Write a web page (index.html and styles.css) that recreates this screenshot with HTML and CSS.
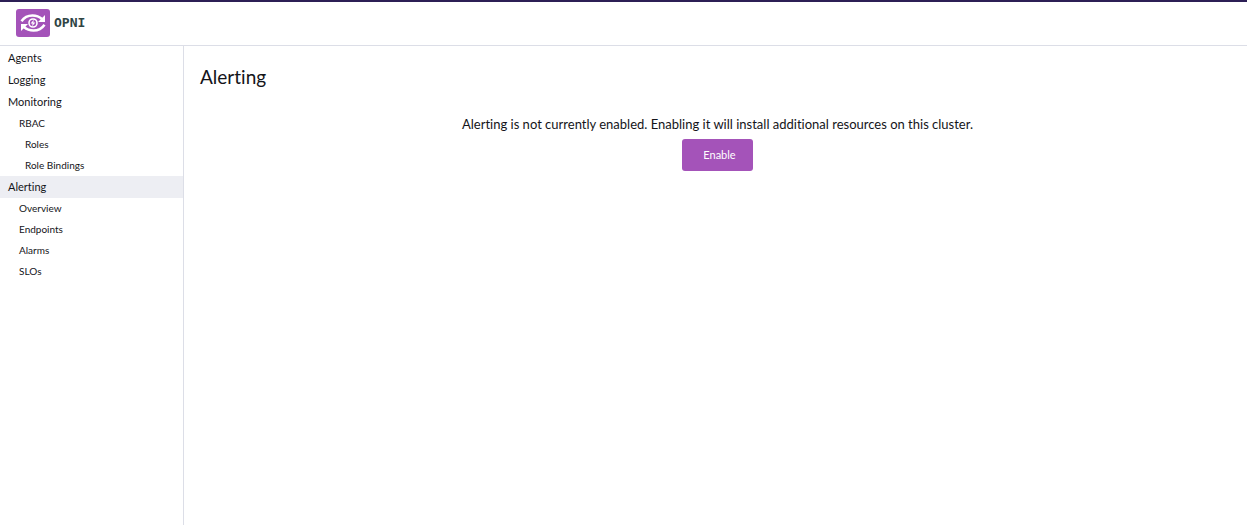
FILE: index.html
```html
<!DOCTYPE html>
<html lang="en">
<head>
<meta charset="utf-8">
<title>Opni - Alerting</title>
<link rel="stylesheet" href="styles.css">
</head>
<body>
<header class="header">
  <a class="brand" href="#">
    <svg class="brand-mark" viewBox="0 0 34 28" aria-hidden="true">
      <rect width="34" height="28" rx="3" fill="#a453b9"/>
      <g fill="none" stroke="#fff" stroke-width="2.5">
        <path d="M5.500 12.300C8 8.500 12 6.500 16.500 6.500c4 0 7 1.300 9.500 3.500"/>
        <path d="M28.500 15.700C26 19.500 22 21.500 17.500 21.500c-4 0-7-1.300-9.500-3.500"/>
        <circle cx="17" cy="14" r="4" stroke-width="1.600"/>
      </g>
      <path d="M29 6v7h-7zM5 22v-7h7z" fill="#fff"/>
      <path d="M17.800 10.800l-3.200 3.700h2l-.5 2.800 3.300-3.800h-2.100z" fill="#fff"/>
    </svg>
    <span class="brand-name">OPNI</span>
  </a>
</header>
<div class="layout">
  <nav class="nav" aria-label="Main">
    <a class="nav-item" href="#">Agents</a>
    <a class="nav-item" href="#">Logging</a>
    <a class="nav-item" href="#">Monitoring</a>
    <a class="nav-item nav-child" href="#">RBAC</a>
    <a class="nav-item nav-child nav-grandchild" href="#">Roles</a>
    <a class="nav-item nav-child nav-grandchild" href="#">Role Bindings</a>
    <a class="nav-item nav-active" href="#" aria-current="page">Alerting</a>
    <a class="nav-item nav-child" href="#">Overview</a>
    <a class="nav-item nav-child" href="#">Endpoints</a>
    <a class="nav-item nav-child" href="#">Alarms</a>
    <a class="nav-item nav-child" href="#">SLOs</a>
  </nav>
  <main class="main">
    <h1 class="title">Alerting</h1>
    <section class="empty">
      <p class="message">Alerting is not currently enabled. Enabling it will install additional resources on this cluster.</p>
      <button class="enable" type="button">Enable</button>
    </section>
  </main>
</div>
</body>
</html>
```
FILE: styles.css
```css
* {
  box-sizing: border-box;
}

body {
  display: flex;
  flex-direction: column;
  min-height: 100vh;
  margin: 0;
  background: #fff;
  color: #141419;
  font-family: Lato, sans-serif;
  font-size: 13px;
  font-variant-ligatures: none;
}

.header {
  padding: 7px 16px 8px;
  border-top: 2px solid #2c1f55;
  border-bottom: 1px solid #dcdee7;
}

.brand {
  display: inline-flex;
  align-items: center;
  gap: 4px;
  vertical-align: top;
  text-decoration: none;
}

.brand-mark {
  width: 34px;
  height: 28px;
}

.brand-name {
  color: #2f4444;
  font: bold 13px/28px "DejaVu Sans Mono", monospace;
}

.layout {
  display: flex;
  flex: 1;
}

.nav {
  flex: 0 0 184px;
  padding-top: 1px;
  border-right: 1px solid #dcdee7;
}

.nav-item {
  display: block;
  padding-left: 8px;
  color: inherit;
  font-size: 11px;
  line-height: 22px;
  text-decoration: none;
}

.nav-child {
  padding-left: 19px;
  font-size: 10px;
  line-height: 21px;
}

.nav-grandchild {
  padding-left: 25px;
}

.nav-active {
  background: #edeef3;
}

.main {
  flex: 1;
  padding: 19px 12px 19px 16px;
}

.title {
  margin: 0;
  font-size: 19px;
  font-weight: 400;
  line-height: 24px;
}

.empty {
  display: flex;
  flex-direction: column;
  align-items: center;
  gap: 4px;
  margin-top: 25px;
}

.message {
  margin: 0;
  line-height: 21px;
}

.enable {
  padding: 0 17px 0 21px;
  border: 0;
  border-radius: 3px;
  background: #a453b9;
  color: #fff;
  font-family: inherit;
  font-size: 11px;
  line-height: 32px;
}
```
